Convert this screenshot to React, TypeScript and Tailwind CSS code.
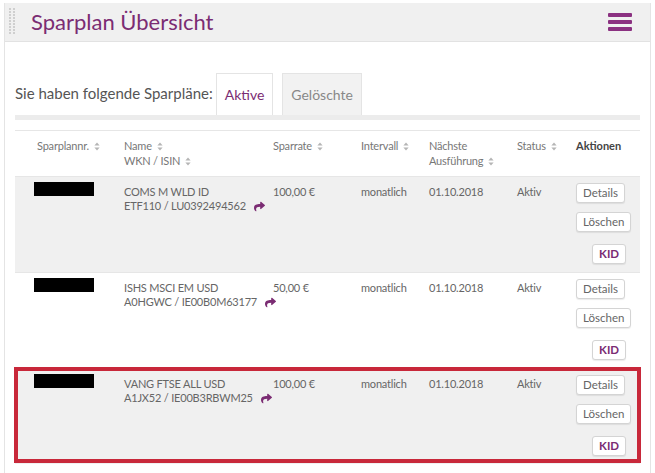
import { FaShare } from "react-icons/fa";

const purple = "#7b2c73";

type Plan = {
  name: string;
  isin: string;
  rate: string;
  shaded: boolean;
  marked?: boolean;
};

const plans: Plan[] = [
  { name: "COMS M WLD ID", isin: "ETF110 / LU0392494562", rate: "100,00 €", shaded: true },
  { name: "ISHS MSCI EM USD", isin: "A0HGWC / IE00B0M63177", rate: "50,00 €", shaded: false },
  { name: "VANG FTSE ALL USD", isin: "A1JX52 / IE00B3RBWM25", rate: "100,00 €", shaded: true, marked: true },
];

function Sort() {
  return (
    <svg width="6" height="9" viewBox="0 0 6 9" className="inline-block ml-[5px] -mt-[2px] align-middle">
      <path d="M3 0.5 L5.6 3.6 H0.4 Z" fill="#b5b5b5" />
      <path d="M3 8.5 L5.6 5.4 H0.4 Z" fill="#b5b5b5" />
    </svg>
  );
}

function Grip() {
  return (
    <svg width="7" height="28" viewBox="0 0 7 28">
      {Array.from({ length: 9 }).map((_, i) => (
        <g key={i}>
          <rect x="0" y={i * 3} width="2" height="2" fill="#cfcfcf" />
          <rect x="4" y={i * 3} width="2" height="2" fill="#cfcfcf" />
        </g>
      ))}
    </svg>
  );
}

function Btn({ children, kid }: { children: string; kid?: boolean }) {
  return (
    <button
      className={
        "h-[20px] px-[6px] bg-white border border-[#d4d4d4] rounded-[3px] text-[11.5px] leading-none shadow-[0_1px_1px_rgba(0,0,0,0.08)] " +
        (kid ? "text-[#7b2c73] font-bold ml-[16px]" : "text-[#666]")
      }
    >
      {children}
    </button>
  );
}

function Row({ p }: { p: Plan }) {
  return (
    <div
      className={
        "relative grid grid-cols-[109px_149px_88px_68px_88px_59px_1fr] h-[96px] border-t border-[#e6e6e6] text-[11px] leading-[14px] text-[#666] tracking-[-0.2px] " +
        (p.shaded ? "bg-[#f0f0f0]" : "bg-white")
      }
    >
      <div className="pl-[19px] pt-[5px]">
        <div className="w-[60px] h-[14px] bg-black" />
      </div>
      <div className="pt-[8px] whitespace-nowrap">
        <div>{p.name}</div>
        <div className="flex items-center">
          {p.isin}
          <FaShare className="ml-[8px] shrink-0" size={11} color={purple} />
        </div>
      </div>
      <div className="pt-[8px]">{p.rate}</div>
      <div className="pt-[8px]">monatlich</div>
      <div className="pt-[8px]">01.10.2018</div>
      <div className="pt-[8px]">Aktiv</div>
      <div className="pt-[6px] flex flex-col items-start tracking-normal">
        <Btn>Details</Btn>
        <div className="h-[9px]" />
        <Btn>Löschen</Btn>
        <div className="h-[12px]" />
        <Btn kid>KID</Btn>
      </div>
      {p.marked && (
        <div className="absolute -left-[1px] -top-[2px] right-[-1px] bottom-[1px] border-4 border-[#c8283a] pointer-events-none" />
      )}
    </div>
  );
}

export default function App() {
  return (
    <div className="w-[655px] h-[473px] bg-white overflow-hidden pt-[3px] font-['Lato',sans-serif]">
      <div className="mx-[4px] h-full border-x border-[#e4e4e4]">
        <div className="h-[39px] bg-[#f0f0f0] border-b border-[#e2e2e2] flex items-center pl-[4px] pr-[18px]">
          <Grip />
          <h1 className="ml-[15px] text-[22px] text-[#7b2c73] leading-none">Sparplan Übersicht</h1>
          <div className="ml-auto flex flex-col gap-[3px]">
            <div className="w-[24px] h-[4px] bg-[#8b3181] rounded-[1px]" />
            <div className="w-[24px] h-[4px] bg-[#8b3181] rounded-[1px]" />
            <div className="w-[24px] h-[4px] bg-[#8b3181] rounded-[1px]" />
          </div>
        </div>
        <div className="px-[10px] pt-[30px]">
          <div className="flex items-end h-[43px]">
            <span className="self-center text-[15px] text-[#555] mr-[3px]">Sie haben folgende Sparpläne:</span>
            <div className="h-[42px] px-[8px] flex items-center bg-white border border-b-0 border-[#e4e4e4] text-[14px] text-[#7b2c73]">
              Aktive
            </div>
            <div className="ml-[9px] h-[42px] px-[8px] flex items-center bg-[#f2f2f2] border border-b-0 border-[#e4e4e4] text-[14px] text-[#888]">
              Gelöschte
            </div>
          </div>
          <div className="h-[5px] bg-[#ececec]" />
          <div className="h-[10px]" />
          <div className="grid grid-cols-[109px_149px_88px_68px_88px_59px_1fr] h-[46px] border-t border-[#e6e6e6] pt-[7px] text-[11px] leading-[15px] text-[#777] tracking-[-0.2px]">
            <div className="pl-[22px]">
              Sparplannr.<Sort />
            </div>
            <div>
              <div>
                Name<Sort />
              </div>
              <div>
                WKN / ISIN<Sort />
              </div>
            </div>
            <div>
              Sparrate<Sort />
            </div>
            <div>
              Intervall<Sort />
            </div>
            <div>
              <div>Nächste</div>
              <div>
                Ausführung<Sort />
              </div>
            </div>
            <div>
              Status<Sort />
            </div>
            <div className="font-bold text-[#444] tracking-normal">Aktionen</div>
          </div>
          {plans.map((p) => (
            <Row key={p.name} p={p} />
          ))}
        </div>
      </div>
    </div>
  );
}
